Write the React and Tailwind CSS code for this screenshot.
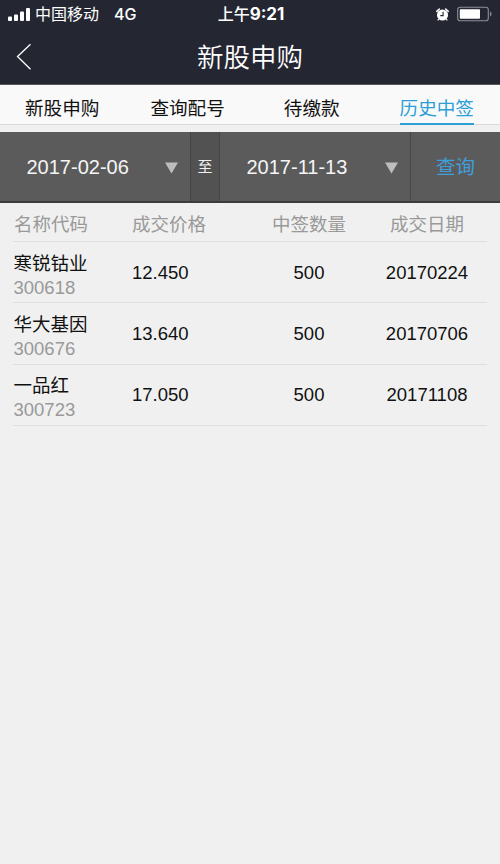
const tabs = [
  { label: '新股申购', box: 'ml-[25px]' },
  { label: '查询配号', box: 'ml-[51px]' },
  { label: '待缴款', box: 'ml-[59px]' },
  { label: '历史中签', box: 'ml-[60px]', active: true },
];

const rows = [
  { name: '寒锐钴业', code: '300618', price: '12.450', qty: '500', date: '20170224' },
  { name: '华大基因', code: '300676', price: '13.640', qty: '500', date: '20170706' },
  { name: '一品红', code: '300723', price: '17.050', qty: '500', date: '20171108' },
];

function StatusBar() {
  return (
    <div className="flex h-[28px] items-center pl-[8px] pr-[8px] text-[16px] leading-[28px]">
      <svg className="shrink-0" width="22" height="13" viewBox="0 0 22 13" fill="#fff">
        <rect x="0" y="8.5" width="4" height="4.5" rx="1" />
        <rect x="6" y="6.5" width="4" height="6.5" rx="1" />
        <rect x="12" y="3.5" width="4" height="9.5" rx="1" />
        <rect x="18" y="0" width="4" height="13" rx="1" />
      </svg>
      <span className="ml-[5px] w-[64px] whitespace-nowrap pt-px">中国移动</span>
      <span className="ml-[15px] w-[104px] font-['Inter',sans-serif] text-[16px] font-medium">4G</span>
      <span className="whitespace-nowrap pt-px font-medium">上午</span>
      <span className="w-[187px] font-['Inter',sans-serif] text-[17px] font-bold">9:21</span>
      <svg className="shrink-0" width="13" height="13" viewBox="0 0 14 14">
        <circle cx="7" cy="7.5" r="6" fill="#fff" />
        <path d="M0.8 3.6 3.6 1M13.2 3.6 10.4 1" stroke="#fff" strokeWidth="1.6" strokeLinecap="round" />
        <path d="M3 12 1.8 13.4M11 12l1.2 1.4" stroke="#fff" strokeWidth="1.3" />
        <path d="M7.6 4v4.200H4.600" stroke="#242732" strokeWidth="1.200" fill="none" />
      </svg>
      <svg className="ml-[7px] shrink-0" width="36" height="16" viewBox="0 0 36 16">
        <rect x="1.700" y="1.200" width="30.600" height="13.600" rx="2.600" fill="none" stroke="#8d8f97" strokeWidth="1.100" />
        <rect x="3.800" y="3.200" width="20.200" height="9.600" rx="0.800" fill="#fff" />
        <path d="M34 5.600c2 .8 2 4 0 4.800z" fill="#8d8f97" />
      </svg>
    </div>
  );
}

function DateField({ value, className }) {
  return (
    <div className={`flex h-full items-center ${className}`}>
      <span className="w-[138.500px] whitespace-nowrap text-[20px] text-[#f5f5f5]">{value}</span>
      <svg className="mt-[3px] shrink-0" width="13" height="12" viewBox="0 0 13 12">
        <path d="M0 0.500h13L6.500 11.500z" fill="#bdbdbd" />
      </svg>
    </div>
  );
}

export default function App() {
  return (
    <div className="flex h-[864px] w-[500px] flex-col overflow-hidden bg-[#f0f0f0] font-['Liberation_Sans','Noto_Sans_CJK_SC',sans-serif]">
      <header className="h-[85px] border-b border-[#55565c] bg-[#242732] text-white">
        <StatusBar />
        <div className="grid h-[57px] grid-cols-[1fr_auto_1fr] items-center">
          <svg className="ml-[16px]" width="16" height="28" viewBox="0 0 16 28" fill="none" stroke="#fff" strokeWidth="1.300">
            <path d="M14.500 1.200 1.500 13.500l13 12.800" />
          </svg>
          <h1 className="pt-[3px] text-[26.500px] font-[350] leading-[54px]">新股申购</h1>
        </div>
      </header>

      <nav className="flex h-[40px] border-b border-[#d9d9d9] bg-[#f9f9f9] text-[18.600px]">
        {tabs.map((t) => (
          <div
            key={t.label}
            className={`h-[40px] whitespace-nowrap leading-[48px] ${t.box} ${
              t.active ? 'border-b-2 border-[#2b9fd6] text-[#2b9fd6]' : 'text-[#111]'
            }`}
          >
            {t.label}
          </div>
        ))}
      </nav>

      <div className="mt-[7px] flex h-[71px] items-center border-b-2 border-[#3c3c3c] bg-[#5b5b5b]">
        <DateField value="2017-02-06" className="w-[190px] pl-[26.500px]" />
        <div className="flex h-full w-[30px] items-center justify-center border-x border-[#454545] bg-[#525252] pt-[2px] text-[15px] text-[#eee]">至</div>
        <DateField value="2017-11-13" className="w-[190px] pl-[26.500px]" />
        <div className="flex h-full flex-1 items-center justify-center border-l border-[#474747] pt-[2px] text-[19.500px] text-[#3f9fdc]">查询</div>
      </div>

      <main className="mx-[13px] text-[18.500px]">
        <div className="grid h-[39px] grid-cols-[119px_117px_120px_1fr] items-center border-b border-[#dfdfdf] pt-[6px] text-[#999]">
          <span className="pl-px">名称代码</span>
          <span>成交价格</span>
          <span className="text-center">中签数量</span>
          <span className="pr-[2px] text-center">成交日期</span>
        </div>
        {rows.map((r) => (
          <div key={r.code} className="grid h-[61.300px] grid-cols-[119px_117px_120px_1fr] items-center border-b border-[#dfdfdf] text-[#111]">
            <div className="pl-[0.500px] pt-[7px] leading-[24px]">
              <div className="h-[24px]">{r.name}</div>
              <div className="h-[24px] text-[#999]">{r.code}</div>
            </div>
            <span className="pt-px">{r.price}</span>
            <span className="pt-px text-center">{r.qty}</span>
            <span className="pr-[2px] pt-px text-center">{r.date}</span>
          </div>
        ))}
      </main>
    </div>
  );
}
